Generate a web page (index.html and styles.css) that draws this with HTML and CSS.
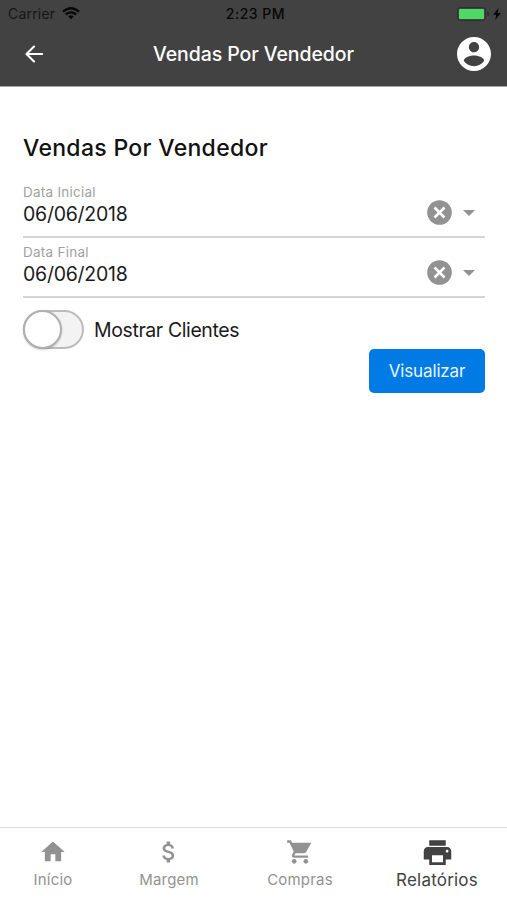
FILE: index.html
```html
<!DOCTYPE html>
<html lang="pt">
<head>
<meta charset="utf-8">
<title>Vendas Por Vendedor</title>
<link rel="stylesheet" href="styles.css">
</head>
<body>
<header class="header">
  <div class="status">
    <div class="carrier"><span class="carrier-name">Carrier</span>
      <svg class="wifi" viewBox="0 0 18 13"><path d="M1 4.7Q9-2.3 17 4.7M3.8 7.5Q9 3.2 14.2 7.5" fill="none" stroke="#080808" stroke-width="2.3"/><path d="M6.2 9.3Q9 7.3 11.8 9.3L9 12.3z" fill="#080808"/></svg>
    </div>
    <div class="clock">2:23 PM</div>
    <div class="power">
      <div class="battery"><div class="charge"></div></div><div class="cap"></div>
      <svg class="bolt" viewBox="0 0 8 12"><path d="M5.6 0L0 6.7h3.2L2.2 12 8 5H4.7z" fill="#080808"/></svg>
    </div>
  </div>
  <div class="navbar">
    <svg class="back" viewBox="0 0 18 18"><path d="M17 9H2M9 1.500L1.500 9 9 16.500" fill="none" stroke="#fff" stroke-width="2.100" stroke-linecap="round" stroke-linejoin="round"/></svg>
    <div class="title">Vendas Por Vendedor</div>
    <svg class="account" viewBox="2 2 20 20"><path fill="#fff" d="M12 2C6.480 2 2 6.480 2 12s4.480 10 10 10 10-4.480 10-10S17.520 2 12 2zm0 3c1.660 0 3 1.340 3 3s-1.340 3-3 3-3-1.340-3-3 1.340-3 3-3zm0 14.200c-2.500 0-4.710-1.280-6-3.220.030-1.990 4-3.080 6-3.080 1.990 0 5.970 1.090 6 3.080-1.290 1.940-3.500 3.220-6 3.220z"/></svg>
  </div>
</header>
<main class="content">
  <h1 class="heading">Vendas Por Vendedor</h1>
  <div class="field">
    <div class="field-text"><div class="label">Data Inicial</div><div class="value">06/06/2018</div></div>
    <svg class="clear" viewBox="0 0 25 25"><circle cx="12.500" cy="12.500" r="12.300" fill="#929292"/><path d="M7.500 7.500l10 10M17.500 7.500l-10 10" stroke="#fff" stroke-width="2.600"/></svg>
    <svg class="caret" viewBox="0 0 12 6"><path d="M0 0h12L6 6z" fill="#929292"/></svg>
  </div>
  <div class="field">
    <div class="field-text"><div class="label">Data Final</div><div class="value">06/06/2018</div></div>
    <svg class="clear" viewBox="0 0 25 25"><circle cx="12.500" cy="12.500" r="12.300" fill="#929292"/><path d="M7.500 7.500l10 10M17.500 7.500l-10 10" stroke="#fff" stroke-width="2.600"/></svg>
    <svg class="caret" viewBox="0 0 12 6"><path d="M0 0h12L6 6z" fill="#929292"/></svg>
  </div>
  <div class="option"><div class="switch"><div class="knob"></div></div><span class="option-text">Mostrar Clientes</span></div>
  <button class="submit">Visualizar</button>
</main>
<nav class="tabs">
  <div class="tab"><svg class="icon" viewBox="0 0 24 24"><path d="M10 20v-6h4v6h5v-8h3L12 3 2 12h3v8z"/></svg><span>Início</span></div>
  <div class="tab"><svg class="icon" viewBox="0 0 24 24"><path d="M11.800 10.900c-2.270-.59-3-1.200-3-2.150 0-1.090 1.010-1.850 2.700-1.850 1.780 0 2.440.85 2.500 2.100h2.210c-.07-1.720-1.120-3.300-3.210-3.810V3h-3v2.160c-1.940.42-3.500 1.680-3.500 3.610 0 2.310 1.910 3.460 4.700 4.130 2.500.6 3 1.480 3 2.410 0 .69-.49 1.790-2.700 1.790-2.060 0-2.870-.92-2.980-2.100h-2.200c.12 2.190 1.760 3.420 3.680 3.830V21h3v-2.150c1.950-.37 3.500-1.500 3.500-3.550 0-2.840-2.430-3.810-4.700-4.400z"/></svg><span>Margem</span></div>
  <div class="tab"><svg class="icon" viewBox="0 0 24 24"><path d="M1 2v2h2l3.600 7.600-1.350 2.450C4.520 15.370 5.480 17 7 17h12v-2H7.420c-.14 0-.25-.11-.25-.25l.93-1.750h7.450c.75 0 1.410-.41 1.750-1.030L21.700 4H5.210l-.94-2z"/><circle cx="7" cy="20" r="2"/><circle cx="17" cy="20" r="2"/></svg><span>Compras</span></div>
  <div class="tab active"><svg class="icon" viewBox="0 0 24 24"><path d="M19 8H5c-1.660 0-3 1.340-3 3v6h4v4h12v-4h4v-6c0-1.660-1.340-3-3-3zm-3 11H8v-5h8v5zm3-7c-.55 0-1-.45-1-1s.45-1 1-1 1 .45 1 1-.45 1-1 1zm-1-9H6v4h12V3z"/></svg><span>Relatórios</span></div>
</nav>
</body>
</html>
```
FILE: styles.css
```css
* { box-sizing: border-box; }
body { margin: 0; height: 900px; display: flex; flex-direction: column; background: #fff; color: #1b1b1b; font-family: Inter, "Liberation Sans", sans-serif; white-space: nowrap; overflow: hidden; }
svg { display: block; flex: none; }
.header { height: 87px; background: #424242; border-bottom: 1px solid #a5a5a5; flex: none; }
.status { height: 27px; display: grid; grid-template-columns: 1fr auto 1fr; align-items: center; padding: 0 6px 0 8px; color: #080808; font-size: 14px; }
.carrier { display: flex; align-items: center; gap: 6px; color: #161616; letter-spacing: .2px; }
.carrier-name { width: 48px; }
.wifi { width: 18px; height: 13px; }
.clock { font-weight: 500; font-size: 14px; letter-spacing: .5px; padding-left: 2px; }
.power { display: flex; align-items: center; justify-content: flex-end; }
.battery { width: 29px; height: 14px; padding: 1px; border: 1px solid #303030; border-radius: 3px; }
.charge { height: 100%; background: #4cd964; border-radius: 1px; }
.cap { width: 2px; height: 4px; background: #303030; margin: 0 4px 0 1px; }
.bolt { width: 8px; height: 12px; }
.navbar { height: 53px; display: grid; grid-template-columns: 100px 1fr 100px; align-items: center; padding: 0 16px 0 25px; }
.back { width: 18px; height: 18px; }
.title { text-align: center; color: #fff; font-weight: 500; font-size: 19.500px; letter-spacing: -.08px; padding-right: 9px; }
.account { width: 34px; height: 34px; justify-self: end; }
.content { flex: 1; padding: 46px 22px 0 23px; display: flex; flex-direction: column; }
.heading { margin: 0 0 15px; height: 30px; line-height: 30px; font-size: 23px; font-weight: 500; letter-spacing: .32px; color: #111; }
.field { height: 60px; display: flex; border-bottom: 2px solid #d5d5d5; align-items: center; padding-right: 10px; }
.field-text { flex: 1; padding-bottom: 5px; }
.label { font-size: 13.500px; line-height: 18px; color: #a1a1a1; letter-spacing: .25px; }
.value { font-size: 19.500px; line-height: 26px; letter-spacing: -.25px; }
.clear { width: 25px; height: 25px; margin-right: 11px; margin-top: 11px; }
.caret { width: 12px; height: 6px; margin-top: 12px; }
.option { height: 39px; margin-top: 12px; display: flex; align-items: center; gap: 10px; font-size: 19.500px; letter-spacing: -.4px; }
.switch { width: 61px; height: 39px; border: 2px solid #bcbcbc; border-radius: 20px; background: #f3f3f3; }
.knob { width: 39px; height: 39px; margin: -2px; background: #fff; border: 2px solid #b0b0b0; border-radius: 50%; box-shadow: 0 1px 2px #0003; }
.submit { align-self: flex-end; width: 116px; height: 44px; margin: 0; padding: 0; border: 0; border-radius: 5px; background: #007be5; color: #e9f5ff; font: 17px Inter, sans-serif; letter-spacing: -.15px; }
.tabs { height: 73px; border-top: 1px solid #dfdfdf; display: grid; grid-template-columns: 106px 126px 136px 138px; }
.tab { display: flex; flex-direction: column; align-items: center; color: #929292; font-size: 15px; letter-spacing: .2px; padding-top: 10px; }
.icon { width: 28px; height: 28px; fill: currentColor; }
.tab span { line-height: 20px; margin-top: 4px; }
.active { color: #424242; font-size: 17px; padding-top: 8px; }
.active .icon { width: 33px; height: 33px; }
.active span { margin-top: 1px; }
```
